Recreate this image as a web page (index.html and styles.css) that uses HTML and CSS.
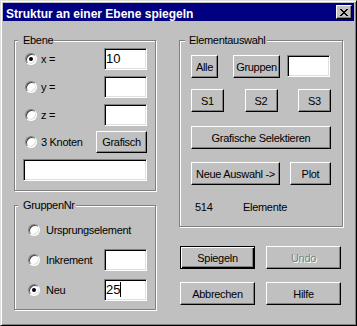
FILE: index.html
```html
<!DOCTYPE html>
<html lang="de">
<head>
    <meta charset="UTF-8">
    <title>Struktur an einer Ebene spiegeln</title>
    <link rel="stylesheet" href="styles.css">
</head>
<body>
    <div class="window">
        <!-- Title bar -->
        <div class="titlebar">
            <span class="title">Struktur an einer Ebene spiegeln</span>
            <button class="close-btn">
                <svg width="8" height="7" viewBox="0 0 8 7" shape-rendering="crispEdges">
                    <path fill="#000" d="M0 0h2v1H0z M6 0h2v1H6z M1 1h2v1H1z M5 1h2v1H5z M2 2h4v1H2z M3 3h2v1H3z M2 4h4v1H2z M1 5h2v1H1z M5 5h2v1H5z M0 6h2v1H0z M6 6h2v1H6z"/>
                </svg>
            </button>
        </div>

        <div class="dialog">
            <div class="col-left">
                <!-- Ebene -->
                <div class="group ebene">
                    <div class="group-title">Ebene</div>
                    <div class="row">
                        <span class="radio checked"></span><span class="lbl">x =</span>
                        <div class="edit">10</div>
                    </div>
                    <div class="row">
                        <span class="radio"></span><span class="lbl">y =</span>
                        <div class="edit"></div>
                    </div>
                    <div class="row">
                        <span class="radio"></span><span class="lbl">z =</span>
                        <div class="edit"></div>
                    </div>
                    <div class="row row-btn">
                        <span class="radio"></span><span class="lbl">3 Knoten</span>
                        <button class="btn btn-grafisch">Grafisch</button>
                    </div>
                    <div class="row">
                        <div class="edit edit-wide"></div>
                    </div>
                </div>

                <!-- GruppenNr -->
                <div class="group gruppen">
                    <div class="group-title">GruppenNr</div>
                    <div class="row">
                        <span class="radio"></span><span class="lbl">Ursprungselement</span>
                    </div>
                    <div class="row">
                        <span class="radio"></span><span class="lbl">Inkrement</span>
                        <div class="edit"></div>
                    </div>
                    <div class="row">
                        <span class="radio checked"></span><span class="lbl">Neu</span>
                        <div class="edit">25<span class="caret"></span></div>
                    </div>
                </div>
            </div>

            <div class="col-right">
                <!-- Elementauswahl -->
                <div class="group auswahl">
                    <div class="group-title">Elementauswahl</div>
                    <div class="sel-row">
                        <button class="btn btn-alle">Alle</button>
                        <button class="btn btn-gruppen">Gruppen</button>
                        <div class="edit edit-gruppen"></div>
                    </div>
                    <div class="sel-row sel-s">
                        <button class="btn btn-s">S1</button>
                        <button class="btn btn-s">S2</button>
                        <button class="btn btn-s">S3</button>
                    </div>
                    <div class="sel-row sel-grafisch">
                        <button class="btn btn-full">Grafische Selektieren</button>
                    </div>
                    <div class="sel-row sel-neu">
                        <button class="btn btn-neu">Neue Auswahl -&gt;</button>
                        <button class="btn btn-plot">Plot</button>
                    </div>
                    <div class="info">
                        <span class="count">514</span>
                        <span>Elemente</span>
                    </div>
                </div>

                <!-- Dialog buttons -->
                <div class="actions">
                    <button class="btn btn-default">Spiegeln</button>
                    <button class="btn" disabled>Undo</button>
                    <button class="btn">Abbrechen</button>
                    <button class="btn">Hilfe</button>
                </div>
            </div>
        </div>
    </div>
</body>
</html>
```

FILE: styles.css
```css
/* General */
* {
    margin: 0;
    padding: 0;
    box-sizing: border-box;
}
body {
    background: #c0c0c0;
    font-family: "Liberation Sans", Arial, sans-serif;
    font-size: 11px;
    letter-spacing: -0.3px;
    color: #000;
}

/* Window frame */
.window {
    width: 357px;
    height: 326px;
    background: #c0c0c0;
    border: 1px solid;
    border-color: #dfdfdf #000 #000 #dfdfdf;
    box-shadow: inset 1px 1px #fff, inset -1px -1px #808080;
    padding: 2px;
}
.titlebar {
    height: 18px;
    background: #000080;
    display: flex;
    align-items: center;
    padding: 0 2px 0 3px;
}
.title {
    flex: 1;
    align-self: flex-start;
    color: #fff;
    font-weight: bold;
    font-size: 12px;
    letter-spacing: 0;
    line-height: 14px;
    padding-top: 4px;
    white-space: nowrap;
}
.close-btn {
    width: 16px;
    height: 14px;
    background: #c0c0c0;
    border: 1px solid;
    border-color: #fff #000 #000 #fff;
    box-shadow: inset -1px -1px #808080;
    display: flex;
    align-items: center;
    justify-content: center;
}
.close-btn svg {
    display: block;
}

/* Dialog body */
.dialog {
    display: flex;
    gap: 23px;
    padding: 19px 0 0 11px;
}
.col-left {
    width: 142px;
    display: flex;
    flex-direction: column;
    gap: 14px;
}
.col-right {
    width: 164px;
}

/* Group boxes */
.group {
    border: 1px solid #808080;
    box-shadow: inset 1px 1px #fff, 1px 1px #fff;
    display: flex;
    flex-direction: column;
}
.group-title {
    align-self: flex-start;
    background: #c0c0c0;
    height: 13px;
    line-height: 13px;
    margin: -7px 0 0 -5px;
    padding: 0 1px 0 5px;
}
.ebene {
    padding: 0 8px 9px 8px;
}
.ebene .group-title {
    margin-bottom: 1px;
}
.gruppen {
    padding: 0 8px 8px 8px;
}
.gruppen .group-title {
    margin-bottom: 7px;
}
.auswahl {
    padding: 0 11px 12px 11px;
}
.auswahl .group-title {
    margin-left: -6px;
    padding-left: 4px;
    margin-bottom: 8px;
}

/* Rows with radios */
.row {
    display: flex;
    align-items: center;
    height: 22px;
}
.ebene .row + .row {
    margin-top: 6px;
}
.ebene .row-btn {
    margin-top: 5px !important;
}
.gruppen .row + .row {
    margin-top: 8px;
}
.radio {
    flex: none;
    width: 12px;
    height: 12px;
    border-radius: 50%;
    background: #fff;
    border: 1px solid;
    border-color: #808080 #fff #fff #808080;
    box-shadow: inset 1px 1px #404040, inset -1px -1px #dfdfdf;
    display: flex;
    align-items: center;
    justify-content: center;
    margin-left: 2px;
}
.radio.checked::after {
    content: "";
    width: 4px;
    height: 4px;
    border-radius: 50%;
    background: #000;
}
.lbl {
    margin-left: 4px;
    white-space: nowrap;
}
.gruppen .radio {
    margin-left: 5px;
}
.gruppen .lbl {
    margin-left: 6px;
}

/* Edit fields */
.edit {
    width: 43px;
    height: 22px;
    margin-left: auto;
    background: #fff;
    border: 1px solid;
    border-color: #808080 #fff #fff #808080;
    box-shadow: inset 1px 1px #000, inset -1px -1px #dfdfdf;
    padding-left: 1px;
    font-size: 13px;
    letter-spacing: 0;
    line-height: 20px;
    white-space: nowrap;
}
.edit-wide {
    width: 124px;
    margin-left: 0;
}
.caret {
    display: inline-block;
    width: 1px;
    height: 15px;
    background: #000;
    vertical-align: -3px;
}

/* Buttons */
.btn {
    font: inherit;
    letter-spacing: inherit;
    color: #000;
    background: #c0c0c0;
    border: 1px solid;
    border-color: #fff #000 #000 #fff;
    box-shadow: inset -1px -1px #808080;
    height: 23px;
    padding: 0;
    display: flex;
    align-items: center;
    justify-content: center;
    white-space: nowrap;
}
.btn:disabled {
    color: #808080;
    text-shadow: 1px 1px #fff;
}
.btn-default {
    border-color: #000;
    box-shadow: inset 1px 1px #fff, inset -1px -1px #000, inset -2px -2px #808080;
}
.btn-grafisch {
    width: 51px;
    height: 22px;
    margin-left: auto;
}

/* Elementauswahl rows */
.sel-row {
    display: flex;
    align-items: flex-start;
    height: 23px;
}
.btn-alle {
    width: 27px;
}
.btn-gruppen {
    width: 47px;
    margin-left: 15px;
}
.edit-gruppen {
    margin-left: 7px;
}
.sel-s {
    justify-content: space-between;
    margin-top: 11px;
}
.btn-s {
    width: 33px;
}
.sel-grafisch {
    margin-top: 14px;
}
.btn-full {
    width: 100%;
}
.sel-neu {
    margin-top: 13px;
}
.btn-neu {
    width: 89px;
}
.btn-plot {
    width: 41px;
    margin-left: auto;
}
.info {
    display: flex;
    margin-top: 16px;
    line-height: 13px;
}
.count {
    width: 48px;
    margin-left: 4px;
}

/* Dialog buttons */
.actions {
    display: grid;
    grid-template-columns: 75px 75px;
    column-gap: 11px;
    row-gap: 13px;
    margin: 19px 0 0 1px;
}
```
